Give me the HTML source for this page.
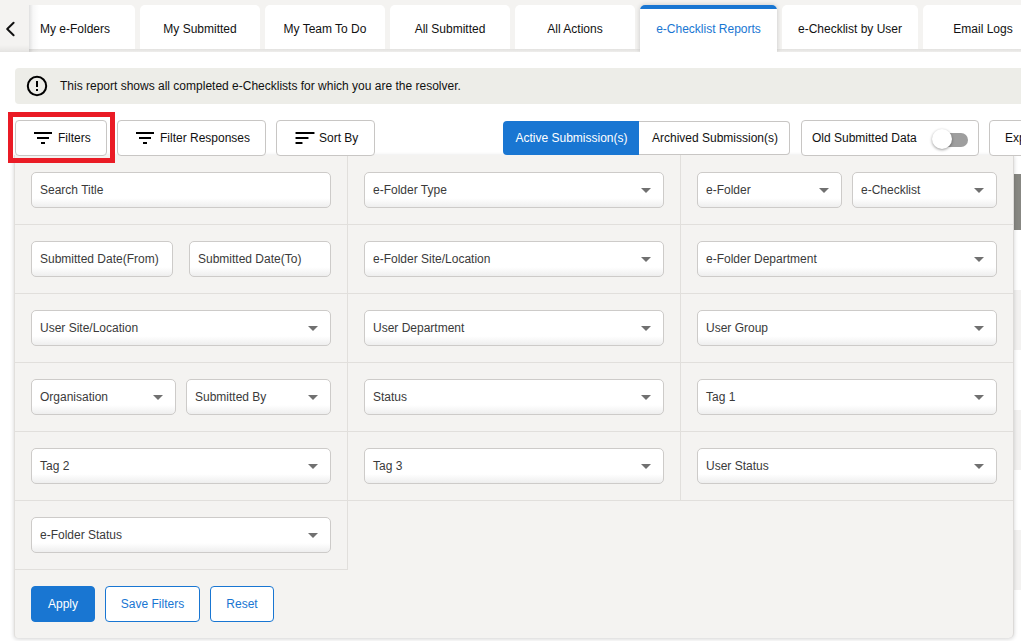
<!DOCTYPE html>
<html><head><meta charset="utf-8">
<style>
*{box-sizing:border-box;margin:0;padding:0}
html,body{width:1021px;height:641px;overflow:hidden;background:#fff;font-family:"Liberation Sans",sans-serif;font-size:12px;color:#111}
.abs{position:absolute}
#strip{position:absolute;left:0;top:0;width:1021px;height:52px;background:#f4f3f1}
#band{position:absolute;left:0;top:49px;width:1021px;height:3px;background:linear-gradient(#e3e2e0,#e9e8e6 60%,#efeeec)}
.tab{position:absolute;top:5px;height:44px;background:#fff;border-radius:5px 5px 0 0;text-align:center;padding-top:4px;line-height:40px;color:#111;white-space:nowrap}
.tab.act{height:47px;color:#1976d2;box-shadow:0 0 5px rgba(0,0,0,.18);padding-top:4px;line-height:40px;overflow:hidden}
.tab.act:before{content:"";position:absolute;left:0;top:0;right:0;height:4px;background:#1976d2}
#tabclip{position:absolute;left:29px;top:0;width:992px;height:52px;overflow:hidden}
#chev{position:absolute;left:0;top:0;width:29px;height:52px;background:linear-gradient(#f4f3f1 0,#f4f3f1 45px,#ecebe9 49px,#e4e3e1 52px)}
#info{position:absolute;left:15px;top:68px;width:1020px;height:36px;background:#edede8;border-radius:4px}
#info .txt{position:absolute;left:45px;top:0;line-height:36px;color:#111}
.btn{position:absolute;background:#fff;border:1px solid #c8c6c4;border-radius:4px;line-height:34px;white-space:nowrap;color:#111}
#panel{position:absolute;left:14px;top:155px;width:1000px;height:483px;background:#f4f3f1;border-left:1px solid #e1dfdc;border-right:1px solid #dcdad8;border-radius:0 0 5px 4px;box-shadow:0 1px 4px rgba(0,0,0,.18)}
.vl{position:absolute;width:1px;background:#e1dfdc}
.hl{position:absolute;height:1px;background:#e1dfdc}
.inp{position:absolute;height:36px;border:1px solid #cdcbc9;border-radius:5px;background:linear-gradient(to bottom,#fff 0,#fff 74%,#eeeeee 100%);line-height:34px;padding-left:8px;color:#3a3a3a;white-space:nowrap}
.dd:after{content:"";position:absolute;right:12px;top:15px;border-left:5px solid transparent;border-right:5px solid transparent;border-top:5px solid #707070}
.bb{position:absolute;top:586px;height:36px;border-radius:4px;line-height:34px;text-align:center;white-space:nowrap}
</style></head><body>
<div id="strip"></div>
<div id="band"></div>
<div id="tabclip">
  <div class="tab" style="left:-14px;width:120px">My e-Folders</div>
  <div class="tab" style="left:111px;width:120px">My Submitted</div>
  <div class="tab" style="left:236px;width:120px">My Team To Do</div>
  <div class="tab" style="left:361px;width:120px">All Submitted</div>
  <div class="tab" style="left:486px;width:120px">All Actions</div>
  <div class="tab act" style="left:611px;width:137px">e-Checklist Reports</div>
  <div class="tab" style="left:753px;width:136px">e-Checklist by User</div>
  <div class="tab" style="left:894px;width:120px">Email Logs</div>
</div>
<div class="abs" style="left:29px;top:5px;width:10px;height:47px;background:linear-gradient(to right,rgba(0,0,0,.12),rgba(0,0,0,.03) 40%,rgba(0,0,0,0))"></div>
<div id="chev">
  <svg class="abs" style="left:5px;top:21px" width="12" height="16" viewBox="0 0 12 16"><path d="M8.6 1.8 L2.2 8 L8.6 14.2" fill="none" stroke="#111" stroke-width="2" stroke-linecap="round" stroke-linejoin="round"/></svg>
</div>

<div id="info">
  <svg class="abs" style="left:11px;top:7px" width="22" height="22" viewBox="0 0 22 22"><circle cx="11" cy="11" r="9.2" fill="none" stroke="#000" stroke-width="2"/><rect x="10" y="6" width="2" height="6" fill="#000"/><rect x="10" y="14" width="2" height="2" fill="#000"/></svg>
  <div class="txt">This report shows all completed e-Checklists for which you are the resolver.</div>
</div>

<div class="abs" style="left:1014px;top:290px;width:7px;height:60px;background:#f3f2f1"></div>
<div class="abs" style="left:1014px;top:410px;width:7px;height:60px;background:#f3f2f1"></div>
<div class="abs" style="left:1014px;top:530px;width:7px;height:60px;background:#f3f2f1"></div>
<div class="abs" style="left:1014px;top:174px;width:7px;height:56px;background:#878782"></div>
<div id="panel"></div>
<div class="hl" style="left:15px;top:224px;width:998px"></div>
<div class="hl" style="left:15px;top:293px;width:998px"></div>
<div class="hl" style="left:15px;top:362px;width:998px"></div>
<div class="hl" style="left:15px;top:431px;width:998px"></div>
<div class="hl" style="left:15px;top:500px;width:998px"></div>
<div class="hl" style="left:15px;top:569px;width:333px"></div>
<div class="vl" style="left:347px;top:155px;height:414px"></div>
<div class="vl" style="left:680px;top:155px;height:345px"></div>
<div class="inp" style="left:31px;top:172px;width:300px">Search Title</div>
<div class="inp dd" style="left:364px;top:172px;width:300px">e-Folder Type</div>
<div class="inp dd" style="left:697px;top:172px;width:145px">e-Folder</div>
<div class="inp dd" style="left:852px;top:172px;width:145px">e-Checklist</div>
<div class="inp" style="left:31px;top:241px;width:142px">Submitted Date(From)</div>
<div class="inp" style="left:189px;top:241px;width:142px">Submitted Date(To)</div>
<div class="inp dd" style="left:364px;top:241px;width:300px">e-Folder Site/Location</div>
<div class="inp dd" style="left:697px;top:241px;width:300px">e-Folder Department</div>
<div class="inp dd" style="left:31px;top:310px;width:300px">User Site/Location</div>
<div class="inp dd" style="left:364px;top:310px;width:300px">User Department</div>
<div class="inp dd" style="left:697px;top:310px;width:300px">User Group</div>
<div class="inp dd" style="left:31px;top:379px;width:145px">Organisation</div>
<div class="inp dd" style="left:186px;top:379px;width:145px">Submitted By</div>
<div class="inp dd" style="left:364px;top:379px;width:300px">Status</div>
<div class="inp dd" style="left:697px;top:379px;width:300px">Tag 1</div>
<div class="inp dd" style="left:31px;top:448px;width:300px">Tag 2</div>
<div class="inp dd" style="left:364px;top:448px;width:300px">Tag 3</div>
<div class="inp dd" style="left:697px;top:448px;width:300px">User Status</div>
<div class="inp dd" style="left:31px;top:517px;width:300px">e-Folder Status</div>
<div class="bb" style="left:31px;width:64px;background:#1976d2;color:#fff;border:1px solid #1976d2">Apply</div>
<div class="bb" style="left:105px;width:95px;background:#fff;color:#1976d2;border:1px solid #1976d2">Save Filters</div>
<div class="bb" style="left:210px;width:64px;background:#fff;color:#1976d2;border:1px solid #1976d2">Reset</div>

<!-- top buttons -->
<div class="btn" style="left:15px;top:120px;width:92px;height:36px">
  <svg class="abs" style="left:18px;top:10px" width="19" height="13" viewBox="0 0 19 13"><rect x="0" y="1" width="18" height="2" fill="#000"/><rect x="3" y="6" width="12" height="2" fill="#000"/><rect x="7" y="11" width="4" height="2" fill="#000"/></svg>
  <span class="abs" style="left:42px;top:0">Filters</span>
</div>
<div class="btn" style="left:117px;top:120px;width:149px;height:36px">
  <svg class="abs" style="left:18px;top:10px" width="19" height="13" viewBox="0 0 19 13"><rect x="0" y="1" width="18" height="2" fill="#000"/><rect x="3" y="6" width="12" height="2" fill="#000"/><rect x="7" y="11" width="4" height="2" fill="#000"/></svg>
  <span class="abs" style="left:42px;top:0">Filter Responses</span>
</div>
<div class="btn" style="left:276px;top:120px;width:99px;height:36px">
  <svg class="abs" style="left:18px;top:10px" width="21" height="13" viewBox="0 0 21 13"><rect x="0.5" y="1" width="19" height="2" rx="0.6" fill="#000"/><rect x="0.5" y="6" width="13" height="2" rx="0.6" fill="#000"/><rect x="0.5" y="11" width="7" height="2" rx="0.6" fill="#000"/></svg>
  <span class="abs" style="left:42px;top:0">Sort By</span>
</div>
<div class="abs" style="left:503px;top:121px;width:137px;height:34px;border-radius:4px 0 0 4px;background:#1976d2;color:#fff;text-align:center;line-height:34px">Active Submission(s)</div>
<div class="abs" style="left:639px;top:121px;width:151px;height:34px;border:1px solid #c8c6c4;border-left:none;border-radius:0 4px 4px 0;background:#fff;text-align:center;line-height:32px;white-space:nowrap;padding-left:2px">Archived Submission(s)</div>
<div class="btn" style="left:801px;top:120px;width:178px;height:36px">
  <span class="abs" style="left:10px;top:0">Old Submitted Data</span>
  <div class="abs" style="left:133px;top:12px;width:33px;height:14px;border-radius:7px;background:#9e9e9e"></div>
  <div class="abs" style="left:130px;top:8px;width:20px;height:20px;border-radius:10px;background:#fff;box-shadow:0 1px 3px rgba(0,0,0,.4)"></div>
</div>
<div class="btn" style="left:989px;top:120px;width:60px;height:36px">
  <span class="abs" style="left:15px;top:0">Export</span>
</div>

<!-- red highlight -->
<div class="abs" style="left:8px;top:112px;width:107px;height:51px;border:5px solid #ea1b25"></div>
</body></html>
